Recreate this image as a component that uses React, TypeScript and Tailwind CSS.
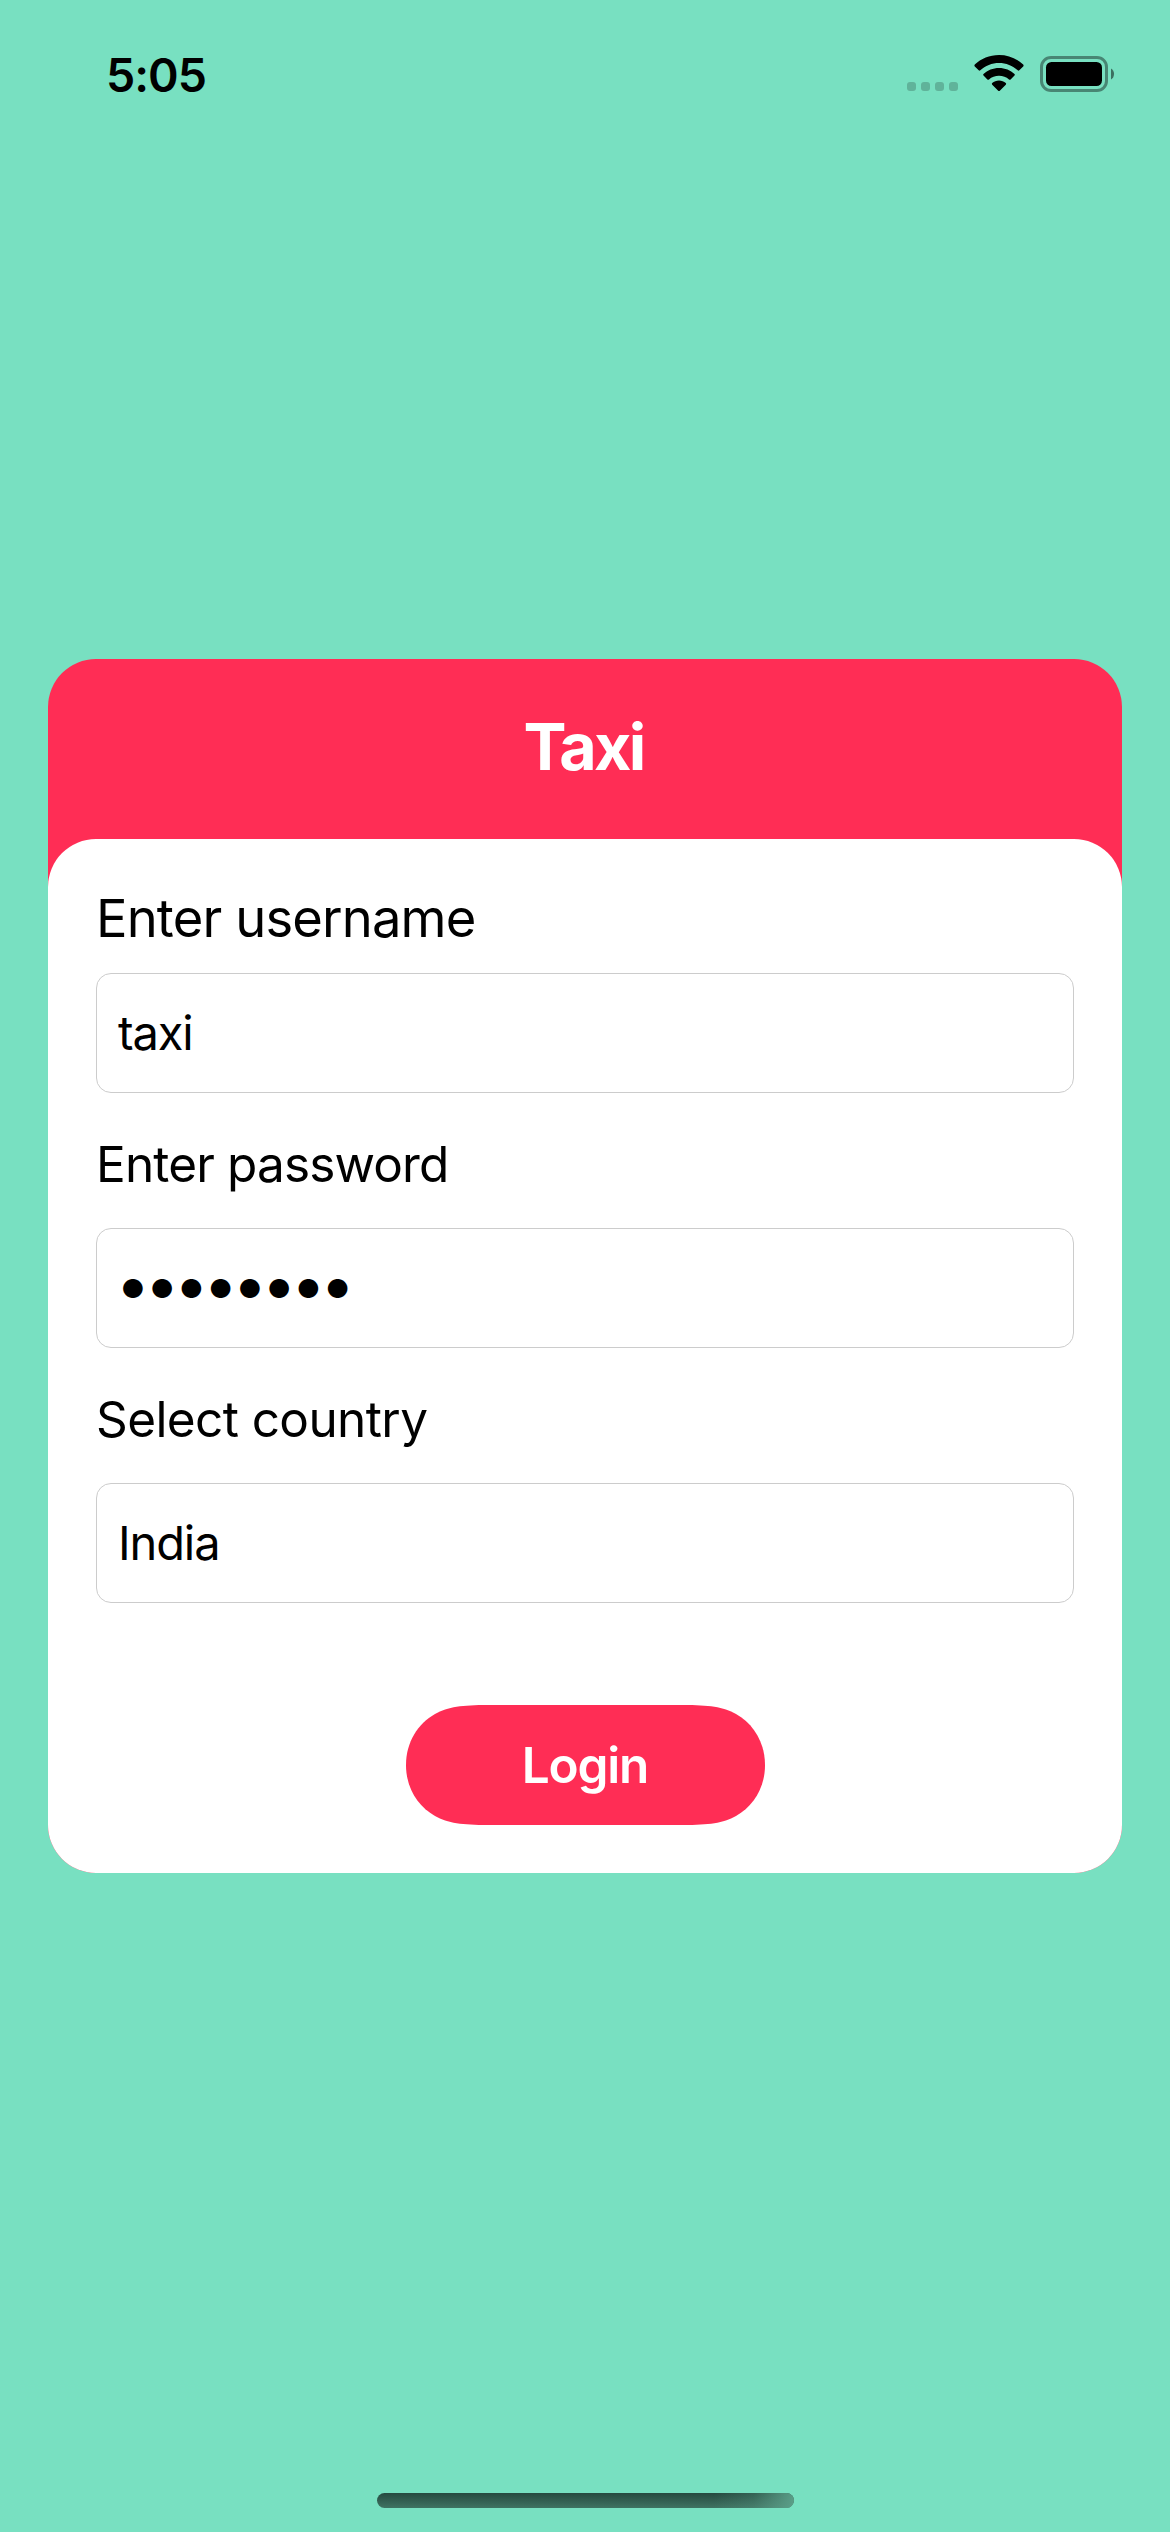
import React from "react";

function StatusBar() {
  return (
    <div className="flex h-[150px] items-start justify-between pr-[54px] pl-[106px]">
      <div className="pt-[45px] text-[46.5px] leading-[60px] font-semibold tracking-[-1px]">5:05</div>
      <div className="flex h-[37px] items-start pt-[55px]">
        <div className="mt-[27px] mr-4 flex gap-[5px]">
          {[0, 1, 2, 3].map((i) => (
            <div key={i} className="size-[9px] rounded-[3px] bg-black/20" />
          ))}
        </div>
        <svg className="mr-4 h-[37px] w-[50px]" viewBox="0 0 50 37">
          <path d="M25 0C34.500 0 43 3.700 49.200 9.600Q50 10.500 49.200 11.400L45.300 15.300Q44.500 16 43.700 15.300C38.700 10.700 32 8 25 8S11.300 10.700 6.300 15.300Q5.500 16 4.700 15.300L.8 11.400Q0 10.500 .8 9.600C7 3.700 15.500 0 25 0Z" />
          <path d="M25 12.900C31 12.900 36.500 15.200 40.500 18.900Q41.300 19.700 40.500 20.500L36.600 24.400Q35.800 25.100 35 24.400C32.300 22 28.800 20.700 25 20.700S17.700 22 15 24.400Q14.200 25.100 13.400 24.400L9.500 20.500Q8.700 19.700 9.500 18.900C13.500 15.200 19 12.900 25 12.900Z" />
          <path d="M25 25.600C27.600 25.600 30 26.500 31.800 28.100Q32.600 28.900 31.800 29.700L25.800 35.700Q25 36.400 24.200 35.700L18.200 29.700Q17.400 28.900 18.200 28.100C20 26.500 22.400 25.600 25 25.600Z" />
        </svg>
        <svg className="mt-px h-[36px] w-[76px]" viewBox="0 0 76 36">
          <rect x="1.500" y="1.500" width="65" height="33" rx="9.500" fill="none" stroke="black" strokeWidth="3" opacity="0.4" />
          <rect x="6" y="6" width="56" height="24" rx="5.500" />
          <path d="M71 12.500A6.500 6.500 0 0 1 71 23.500Z" opacity="0.5" />
        </svg>
      </div>
    </div>
  );
}

function Field({ children }: { children: React.ReactNode }) {
  return (
    <div className="flex h-[120px] items-center rounded-[15px] border border-[#cccccc] px-[21px] text-[47px] tracking-[-1.1px]">
      {children}
    </div>
  );
}

export default function App() {
  return (
    <div className="flex h-[2532px] w-[1170px] flex-col bg-[#78e0c1] font-[Inter,sans-serif] text-black">
      <StatusBar />
      <main className="mx-12 mt-[509px] rounded-[48px] bg-[#ff2d55]">
        <h1 className="mb-[3px] pr-[3px] text-center text-[64.5px] leading-[177px] font-bold tracking-[-2.7px] text-white">Taxi</h1>
        <div className="flex flex-col rounded-[48px] bg-white px-12 pt-[49px] pb-12">
          <label className="mb-[25px] text-[52.5px] leading-[60px] tracking-[-0.85px]">Enter username</label>
          <Field>
            <span>taxi</span>
          </Field>
          <label className="mt-[41px] mb-[34px] text-[49.5px] leading-[60px] tracking-[-0.85px]">Enter password</label>
          <Field>
            <span className="pl-[3px] text-[26px] tracking-[5.5px]">●●●●●●●●</span>
          </Field>
          <label className="mt-[41px] mb-[34px] text-[49.5px] leading-[60px] tracking-[-0.6px]">Select country</label>
          <Field>
            <span>India</span>
          </Field>
          <button className="relative mt-[102px] h-[120px] w-[359px] self-center text-[49.5px] leading-[120px] font-semibold tracking-[-1.2px] text-white">
            <svg className="absolute inset-0 size-full" viewBox="0 0 359 120" fill="#ff2d55">
              <path d="M0 60C0 37 12 18.500 29 9C42 1.800 56 0 82 0H277C303 0 317 1.800 330 9C347 18.500 359 37 359 60S347 101.500 330 111C317 118.200 303 120 277 120H82C56 120 42 118.200 29 111C12 101.500 0 83 0 60Z" />
            </svg>
            <span className="relative">Login</span>
          </button>
        </div>
      </main>
      <div className="mt-auto mb-6 h-[15px] w-[417px] self-center overflow-hidden rounded-full bg-linear-to-b from-[#264a40] to-[#3f7362]">
        <div className="ml-auto h-full w-[80px] bg-linear-to-r from-[#5fa58e]/0 via-[#5fa58e]/25 to-[#5fa58e]/90" />
      </div>
    </div>
  );
}
